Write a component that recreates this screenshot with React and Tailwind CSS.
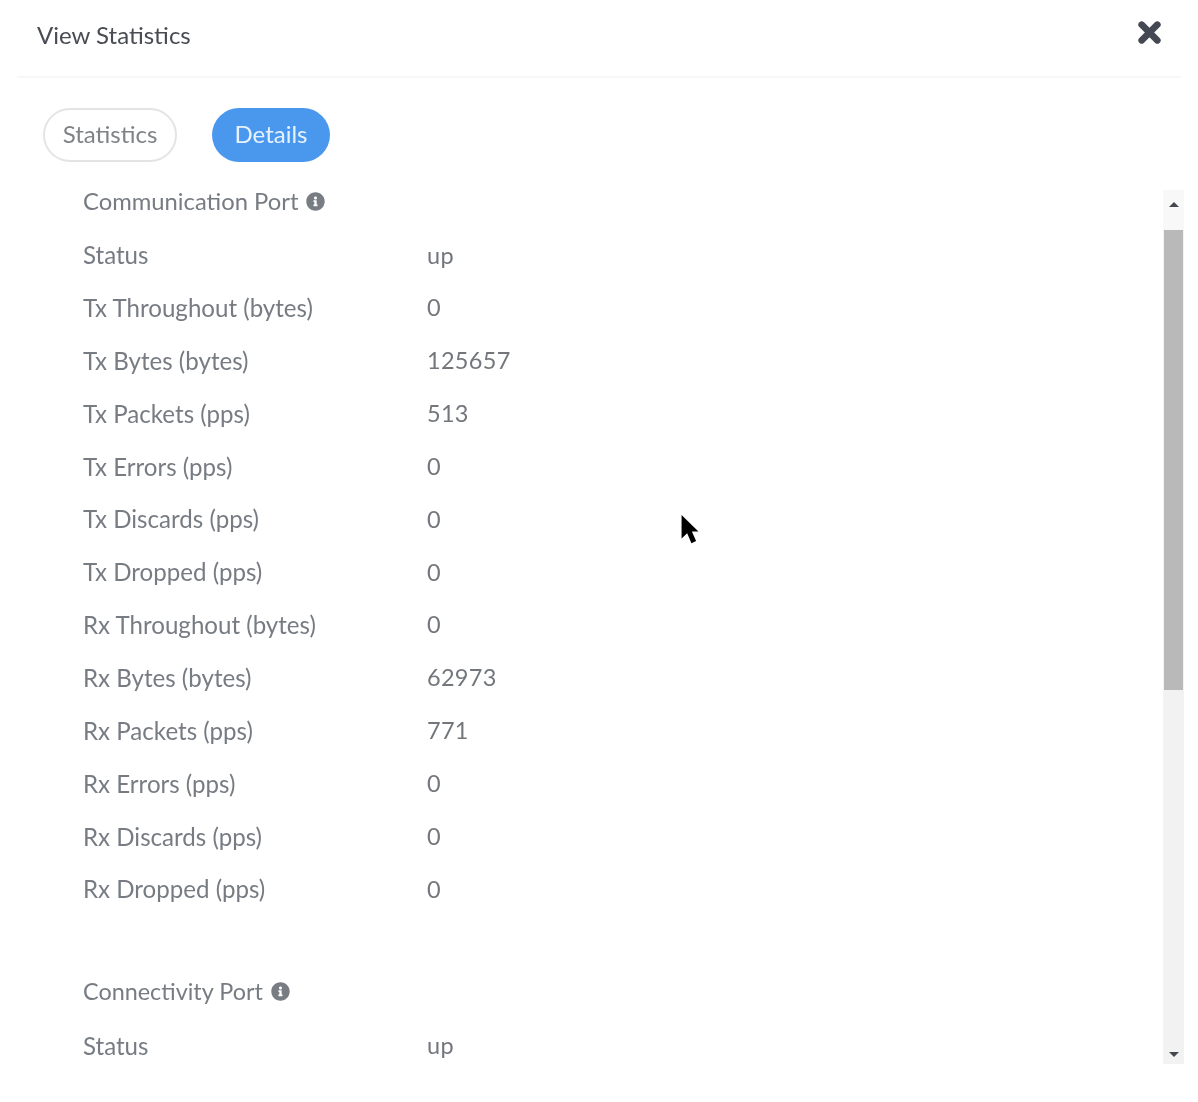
import React from "react";

const comm = [
  ["Status", "up"],
  ["Tx Throughout (bytes)", "0"],
  ["Tx Bytes (bytes)", "125657"],
  ["Tx Packets (pps)", "513"],
  ["Tx Errors (pps)", "0"],
  ["Tx Discards (pps)", "0"],
  ["Tx Dropped (pps)", "0"],
  ["Rx Throughout (bytes)", "0"],
  ["Rx Bytes (bytes)", "62973"],
  ["Rx Packets (pps)", "771"],
  ["Rx Errors (pps)", "0"],
  ["Rx Discards (pps)", "0"],
  ["Rx Dropped (pps)", "0"],
];

function Info() {
  return (
    <svg viewBox="0 0 512 512" className="w-[19px] h-[19px] ml-[8px] shrink-0" fill="#787d84">
      <path d="M256 8C119 8 8 119 8 256s111 248 248 248 248-111 248-248S393 8 256 8zm0 110c23 0 42 19 42 42s-19 42-42 42-42-19-42-42 19-42 42-42zm56 254c0 7-5 12-12 12h-88c-7 0-12-5-12-12v-24c0-7 5-12 12-12h12v-64h-12c-7 0-12-5-12-12v-24c0-7 5-12 12-12h64c7 0 12 5 12 12v100h12c7 0 12 5 12 12v24z" />
    </svg>
  );
}

function Heading({ children, size }) {
  return (
    <div className={`h-[52.85px] flex items-center leading-none text-[#777c83] pb-[2px] ${size}`}>
      {children}
      <Info />
    </div>
  );
}

function Row({ label, value }) {
  return (
    <div className="h-[52.85px] flex items-center leading-none">
      <div className="w-[344px] shrink-0 text-[24.1px] text-[#777c83]">{label}</div>
      <div className="text-[23.5px] text-[#73777c] tracking-[0.3px]">{value}</div>
    </div>
  );
}

export default function App() {
  return (
    <div className="relative w-[1198px] h-[1102px] bg-white overflow-hidden blur-[0.7px] font-['Lato',sans-serif]">
      <header className="mx-[17px] h-[78px] border-b-2 border-[#f7f7f7] flex items-center justify-between pl-[20px] pr-[19px] pb-[6px]">
        <h1 className="text-[24px] font-normal text-[#484c52]">View Statistics</h1>
        <svg viewBox="0 0 24 24" className="w-[25px] h-[25px] mb-[5px]" fill="none" stroke="#434852" strokeWidth="6.4" strokeLinecap="round">
          <path d="M4.5 4.5 19.5 19.5M19.5 4.5 4.5 19.5" />
        </svg>
      </header>

      <nav className="flex gap-[35px] pl-[43px] pt-[30px]">
        <button className="w-[134px] h-[54px] pb-[2px] rounded-full border-2 border-[#e4e4e4] bg-white text-[24px] text-[#7f8286]">Statistics</button>
        <button className="w-[118px] h-[54px] pb-[2px] rounded-full bg-[#4a97ee] text-[24px] text-[#e6f2fe]">Details</button>
      </nav>

      <div className="flex pl-[83px] pr-[14px] pt-[14px] h-[890px]">
        <div className="flex-1 h-[890px] overflow-hidden">
          <Heading size="text-[23.8px]">Communication Port</Heading>
          {comm.map(([l, v]) => (
            <Row key={l} label={l} value={v} />
          ))}
          <div className="h-[50.5px]" />
          <Heading size="text-[23.4px]">Connectivity Port</Heading>
          <Row label="Status" value="up" />
        </div>
        <div className="w-[21px] h-[874px] mt-[14px] bg-[#f2f2f3] flex flex-col items-center rounded-t-[3px]">
          <div className="h-[28px] w-full flex items-center justify-center bg-[#f8f8f8]">
            <div className="w-0 h-0 border-x-[5px] border-x-transparent border-b-[5px] border-b-[#44484e]" />
          </div>
          <div className="h-[12px] w-full bg-[#f8f8f8]" />
          <div className="w-[19px] h-[460px] bg-[#b9b9b9]" />
          <div className="flex-1" />
          <div className="h-[20px] w-full flex items-center justify-center">
            <div className="w-0 h-0 border-x-[5px] border-x-transparent border-t-[5px] border-t-[#44484e]" />
          </div>
        </div>
      </div>

      <svg viewBox="0 0 20 32" className="absolute left-[680px] top-[515px] w-[20px] h-[30px]" fill="#000">
        <path d="M1 0v25l6-5.5 4.5 10.5 5-2.200-4.500-10.300H19z" />
      </svg>
    </div>
  );
}
